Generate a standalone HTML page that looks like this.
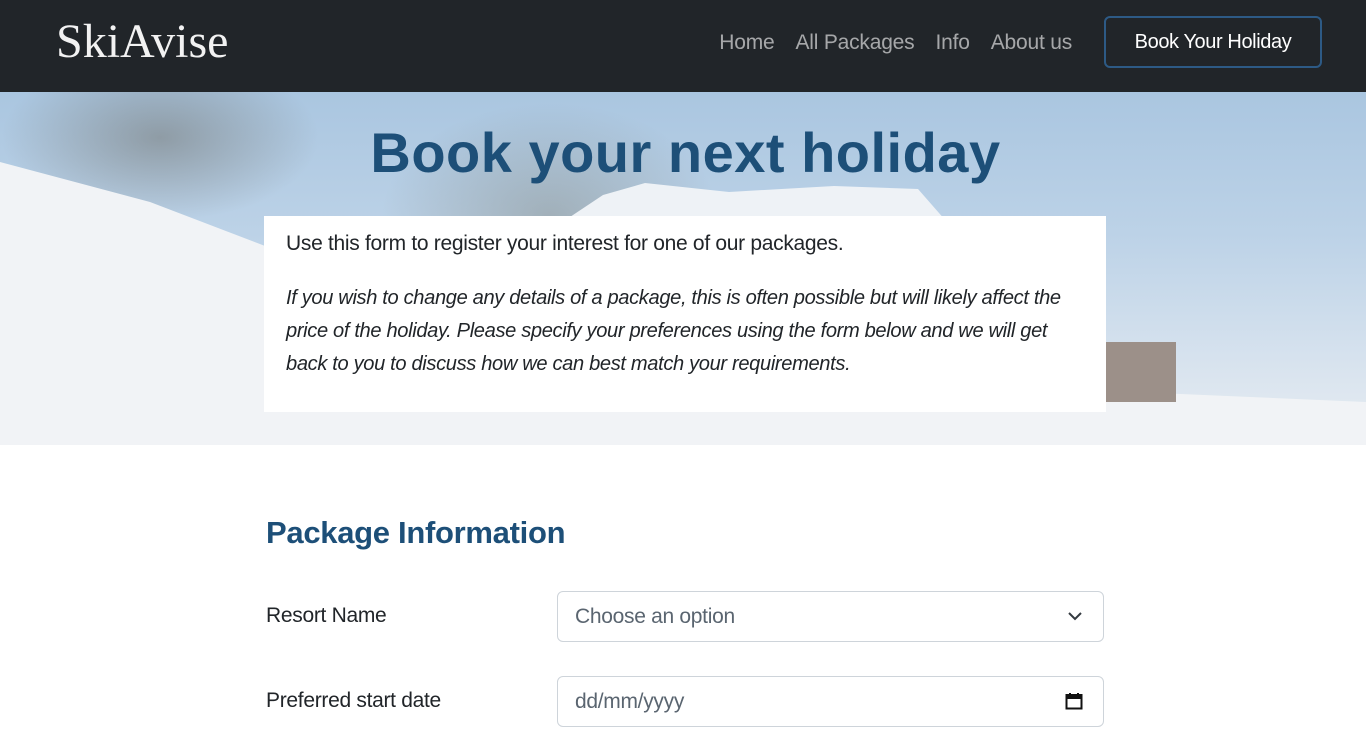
<!DOCTYPE html>
<html><head><style>
*{margin:0;padding:0;box-sizing:border-box}
body{width:1366px;height:739px;overflow:hidden;background:#fff;font-family:"Liberation Sans",sans-serif;}
nav{height:92px;background:#212529;position:relative}
.logo{position:absolute;left:56px;top:14px;color:#f2f2f2;font-family:"Liberation Serif",serif;font-size:48px;letter-spacing:0px}
.links{position:absolute;right:294px;top:31px;display:flex;gap:21px;font-size:21px;color:rgba(255,255,255,.6);letter-spacing:-0.2px}
.btn{position:absolute;left:1104px;top:16px;width:218px;height:52px;border:2px solid #2d5a85;border-radius:6px;color:#fff;font-size:20px;text-align:center;line-height:48px;letter-spacing:-0.4px}
.hero{position:relative;height:353px;overflow:hidden;
background:linear-gradient(180deg,#aac6e0 0%,#bcd2e7 40%,#d6e2ee 75%,#e8edf2 100%)}
.snow{position:absolute;inset:0;background:#f1f3f6;clip-path:polygon(0 70px,150px 110px,320px 175px,560px 250px,900px 290px,1366px 310px,1366px 353px,0 353px)}
.trees{position:absolute;left:0;top:0;width:320px;height:130px;background:radial-gradient(ellipse at 50% 35%,rgba(110,110,105,.5),transparent 70%)}
.trees2{position:absolute;left:380px;top:10px;width:340px;height:230px;background:radial-gradient(ellipse at 50% 50%,rgba(130,135,130,.45),transparent 70%)}
.mtn{position:absolute;left:540px;top:85px;width:420px;height:60px;background:#eef2f6;clip-path:polygon(0 100%,15% 30%,25% 10%,45% 25%,70% 15%,90% 20%,100% 100%)}
.hut{position:absolute;left:1106px;top:250px;width:70px;height:60px;background:#9c9089}
.hero h1{position:absolute;left:0;width:100%;top:28px;text-align:center;font-size:56px;font-weight:900;color:#1d4f78;letter-spacing:0.5px;padding-left:5px}
.box{position:absolute;left:264px;top:124px;width:842px;height:196px;background:#fff;padding:13px 22px;font-size:21px;color:#212529;letter-spacing:-0.3px}
.box p{margin-bottom:23px;line-height:30px}
.box i{display:block;line-height:33px;font-size:20.1px;letter-spacing:-0.35px}
h2{position:absolute;left:266px;top:515px;font-size:31px;color:#1d4f78;font-weight:bold;letter-spacing:-0.3px}
.lbl{position:absolute;left:266px;font-size:21px;color:#212529;letter-spacing:-0.3px}
.inp{position:absolute;left:557px;width:547px;height:51px;border:1px solid #ced4da;border-radius:6px;padding-left:17px;line-height:49px;font-size:21px;color:#5a6570;letter-spacing:-0.3px}
</style></head><body>
<nav>
<div class="logo">SkiAvise</div>
<div class="links"><span>Home</span><span>All Packages</span><span>Info</span><span>About us</span></div>
<div class="btn">Book Your Holiday</div>
</nav>
<div class="hero">
<div class="trees"></div><div class="trees2"></div><div class="mtn"></div><div class="snow"></div><div class="hut"></div>
<h1>Book your next holiday</h1>
<div class="box">
<p>Use this form to register your interest for one of our packages.</p>
<i>If you wish to change any details of a package, this is often possible but will likely affect the price of the holiday. Please specify your preferences using the form below and we will get back to you to discuss how we can best match your requirements.</i>
</div>
</div>
<h2>Package Information</h2>
<div class="lbl" style="top:604px">Resort Name</div>
<div class="inp" style="top:591px">Choose an option
<svg style="position:absolute;right:20px;top:18px" width="16" height="12" viewBox="0 0 16 12"><path d="M2 3l6 6 6-6" fill="none" stroke="#343a40" stroke-width="2"/></svg></div>
<div class="lbl" style="top:689px">Preferred start date</div>
<div class="inp" style="top:676px">dd/mm/yyyy
<svg style="position:absolute;right:20px;top:15px" width="18" height="18" viewBox="0 0 18 18"><rect x="1.5" y="3" width="15" height="13.5" fill="none" stroke="#111" stroke-width="2"/><rect x="1.5" y="3" width="15" height="4" fill="#111"/><path d="M5 1v3M13 1v3" stroke="#111" stroke-width="2"/></svg></div>
</body></html>
